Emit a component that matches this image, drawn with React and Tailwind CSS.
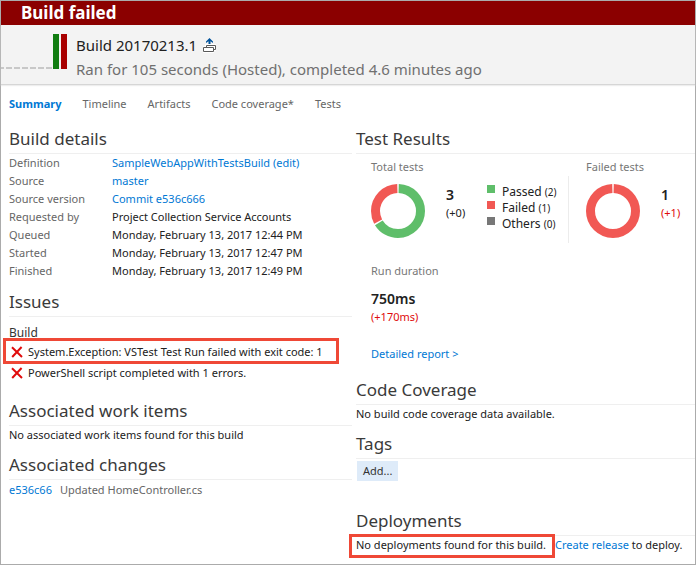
const details = [
  { label: "Definition", value: "SampleWebAppWithTestsBuild (edit)", link: true },
  { label: "Source", value: "master", link: true },
  { label: "Source version", value: "Commit e536c666", link: true },
  { label: "Requested by", value: "Project Collection Service Accounts" },
  { label: "Queued", value: "Monday, February 13, 2017 12:44 PM" },
  { label: "Started", value: "Monday, February 13, 2017 12:47 PM" },
  { label: "Finished", value: "Monday, February 13, 2017 12:49 PM" },
];

const legend = [
  { name: "Passed", count: 2, color: "bg-[#5fbe6a]" },
  { name: "Failed", count: 1, color: "bg-[#f15854]" },
  { name: "Others", count: 0, color: "bg-[#777777]" },
];

const tabs = ["Summary", "Timeline", "Artifacts", "Code coverage*", "Tests"];

function Link({ children }) {
  return (
    <a href="#" className="whitespace-nowrap text-[#0078d4] hover:underline">
      {children}
    </a>
  );
}

function Heading({ children }) {
  return (
    <h2 className="border-b border-[#efefef] text-[17px] leading-7 text-[#3a3a3a]">
      {children}
    </h2>
  );
}

// Ring chart: each slice is a dash on a circle of circumference 100.
function Donut({ label, slices }) {
  let start = 0;
  return (
    <svg role="img" aria-label={label} viewBox="0 0 54 54" className="size-[54px] shrink-0">
      <g transform="rotate(-90 27 27)" fill="none" strokeWidth="9">
        {slices.map((slice) => {
          const offset = -start - 0.5;
          start += slice.share;
          return (
            <circle
              key={slice.color}
              cx="27"
              cy="27"
              r="22.5"
              pathLength="100"
              stroke={slice.color}
              strokeDasharray={`${slice.share - 1} ${101 - slice.share}`}
              strokeDashoffset={offset}
            />
          );
        })}
      </g>
    </svg>
  );
}

function Cross() {
  return (
    <svg aria-hidden="true" viewBox="0 0 12 12" className="size-3 shrink-0">
      <path d="M1 1.2 11 11M10.6 1 1.2 11" fill="none" stroke="#e00b0b" strokeWidth="2" />
    </svg>
  );
}

export default function App() {
  return (
    <div className="min-h-screen border border-[#ababab] bg-white font-['Noto_Sans','Open_Sans',sans-serif] text-[11px] leading-[18px] text-[#212121]">
      <header>
        <h1 className="bg-[#8b0000] pl-5 text-[17px] leading-6 font-bold text-white">Build failed</h1>
        <div className="flex border-b border-[#d6d6d6] bg-[#f3f3f3] pt-2 pb-[3px] shadow-[0_1px_1px_#eeeeee]">
          <svg aria-hidden="true" viewBox="0 0 67 36" className="h-9 w-[67px] shrink-0">
            <path d="M0 35H51" stroke="#c8c8c8" strokeWidth="2" strokeDasharray="6 2" strokeDashoffset="3" />
            <path d="M52 1h6v35h-6z" fill="#107c10" />
            <path d="M60 1h6v35h-6z" fill="#a80000" />
          </svg>
          <div className="pl-2 text-[15px] leading-6">
            <div className="flex items-center gap-1.5">
              <span>Build 20170213.1</span>
              <button type="button" aria-label="Open build" className="cursor-pointer">
                <svg aria-hidden="true" viewBox="0 0 13 15" className="h-[15px] w-[13px]">
                  <path d="M0 8h2V6h11v7h-2v2H0z" fill="#fff" />
                  <path d="M3.500 9.500V7.500h9v4H10.500M.5 9.500h10v4H.5z" fill="none" stroke="#5a5a5a" />
                  <path d="M6.500 0 10 3.400V5L7.500 3.200V6h-2V3.200L3 5V3.400z" fill="#00539c" />
                </svg>
              </button>
            </div>
            <p className="text-[#707070]">Ran for 105 seconds (Hosted), completed 4.6 minutes ago</p>
          </div>
        </div>
      </header>

      <nav className="flex gap-[21px] pt-[10px] pb-3 pl-2">
        {tabs.map((tab, i) => (
          <a
            key={tab}
            href="#"
            className={i === 0 ? "font-bold text-[#0078d4]" : "text-[#666666]"}
          >
            {tab}
          </a>
        ))}
      </nav>

      <main className="grid grid-cols-[343fr_339fr] gap-x-1 pl-2">
        <div>
          <section className="mb-2">
            <Heading>Build details</Heading>
            <dl>
              {details.map((row) => (
                <div key={row.label} className="flex">
                  <dt className="w-[103px] shrink-0 text-[#666666]">{row.label}</dt>
                  <dd>{row.link ? <Link>{row.value}</Link> : row.value}</dd>
                </div>
              ))}
            </dl>
          </section>

          <section className="mb-[14px]">
            <Heading>Issues</Heading>
            <h3 className="mt-2 text-xs leading-4 text-[#333333]">Build</h3>
            <ul>
              <li className="relative flex h-[21px] items-center gap-[5px] pl-0.5">
                <Cross />
                <span className="whitespace-nowrap">
                  System.Exception: VSTest Test Run failed with exit code: 1
                </span>
                <span className="absolute -top-[3px] -left-1.5 h-[26px] w-[336px] border-3 border-[#ef4836]" />
              </li>
              <li className="flex h-[21px] items-center gap-[5px] pl-0.5">
                <Cross />
                <span>PowerShell script completed with 1 errors.</span>
              </li>
            </ul>
          </section>

          <section className="mb-[7px]">
            <Heading>Associated work items</Heading>
            <p>No associated work items found for this build</p>
          </section>

          <section>
            <Heading>Associated changes</Heading>
            <p className="flex gap-2 pt-px">
              <Link>e536c66</Link>
              <span className="text-[#666666]">Updated HomeController.cs</span>
            </p>
          </section>
        </div>

        <div>
          <section className="mb-[13px]">
            <Heading>Test Results</Heading>
            <div className="flex pt-1 pl-[15px]">
              <div className="w-[198px] shrink-0">
                <h3 className="text-[#777777]">Total tests</h3>
                <div className="flex border-r border-[#ececec] pt-2 pb-[5px]">
                  <Donut
                    label="2 passed, 1 failed"
                    slices={[
                      { share: 66.7, color: "#5fbe6a" },
                      { share: 33.3, color: "#f15854" },
                    ]}
                  />
                  <div className="w-[62px] pt-0.5 pl-[21px]">
                    <div className="text-sm leading-[18px] font-semibold">3</div>
                    <div>(+0)</div>
                  </div>
                  <ul className="text-xs leading-4">
                    {legend.map((item) => (
                      <li key={item.name} className="flex items-start">
                        <span className={`mt-px mr-[7px] size-2 ${item.color}`} />
                        <span>
                          {item.name} <span className="text-[10px]">({item.count})</span>
                        </span>
                      </li>
                    ))}
                  </ul>
                </div>
              </div>
              <div className="pl-[17px]">
                <h3 className="text-[#777777]">Failed tests</h3>
                <div className="flex pt-2">
                  <Donut label="1 failed" slices={[{ share: 100, color: "#f15854" }]} />
                  <div className="pt-0.5 pl-[21px]">
                    <div className="text-sm leading-[18px] font-semibold">1</div>
                    <div className="text-[#e00b0b]">(+1)</div>
                  </div>
                </div>
              </div>
            </div>
            <div className="pt-[19px] pl-[15px]">
              <h3 className="text-[#777777]">Run duration</h3>
              <div className="mt-[10px] text-sm leading-[18px] font-semibold">750ms</div>
              <div className="text-[#e00b0b]">(+170ms)</div>
              <div className="mt-[19px]">
                <Link>Detailed report &gt;</Link>
              </div>
            </div>
          </section>

          <section className="mb-[7px]">
            <Heading>Code Coverage</Heading>
            <p>No build code coverage data available.</p>
          </section>

          <section className="mb-[26px]">
            <Heading>Tags</Heading>
            <button
              type="button"
              className="mt-0.5 ml-px block h-5 cursor-pointer bg-[#deebf9] px-[6px] text-[#333333]"
            >
              Add...
            </button>
          </section>

          <section>
            <Heading>Deployments</Heading>
            <p className="whitespace-nowrap">
              <span className="relative inline-block w-[199px]">
                No deployments found for this build.
                <span className="absolute -top-0.5 right-0 -left-[7px] h-6 border-3 border-[#ef4836]" />
              </span>
              <Link>Create release</Link> to deploy.
            </p>
          </section>
        </div>
      </main>
    </div>
  );
}
